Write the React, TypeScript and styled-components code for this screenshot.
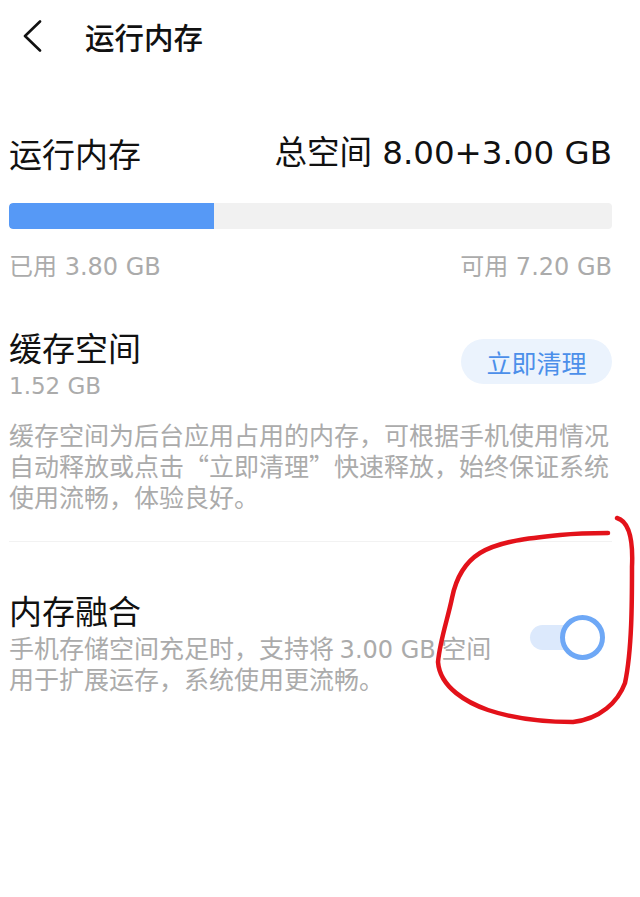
import { createGlobalStyle, styled } from 'styled-components'

const GlobalStyle = createGlobalStyle`
  html, body {
    margin: 0;
    padding: 0;
    background: #ffffff;
  }
  body {
    font-family: "Noto Sans CJK SC", sans-serif;
    color: #111111;
  }
`

const latin = `"DejaVu Sans", "Noto Sans CJK SC", sans-serif`

const Page = styled.div`
  position: relative;
  width: 640px;
  height: 897px;
  overflow: hidden;
  background: #fff;
`

const Header = styled.header`
  height: 72px;
  display: flex;
  align-items: center;
  padding-left: 20px;
  gap: 41px;
`

const BackButton = styled.button`
  border: 0;
  background: none;
  padding: 0;
  width: 24px;
  height: 32px;
  display: flex;
  align-items: center;
  justify-content: center;
`

const HeaderTitle = styled.h1`
  margin: 0;
  font-size: 29.5px;
  font-weight: 500;
  line-height: 40px;
`

const Content = styled.main`
  padding: 61px 28px 0 9px;
`

const Row = styled.div<{ $align?: string }>`
  display: flex;
  justify-content: space-between;
  align-items: ${p => p.$align ?? 'center'};
`

const SectionTitle = styled.h2`
  margin: 0;
  font-size: 33px;
  font-weight: 400;
  line-height: 40px;
`

const Total = styled.span`
  font-family: ${latin};
  font-size: 32.5px;
  line-height: 40px;
`

const Bar = styled.div`
  margin-top: 30px;
  height: 26px;
  border-radius: 4px;
  background: #f1f1f1;
  overflow: hidden;
`

const BarFill = styled.div`
  height: 100%;
  background: #5699f6;
  border-radius: 4px 0 0 4px;
`

const MetaRow = styled(Row)`
  margin-top: 23px;
`

const Meta = styled.span`
  font-family: ${latin};
  font-size: 24px;
  line-height: 30px;
  color: #ababab;
`

const Section = styled.section<{ $gap: number }>`
  margin-top: ${p => p.$gap}px;
`

const SubValue = styled.div`
  margin-top: 4px;
  font-family: ${latin};
  font-size: 23px;
  line-height: 30px;
  color: #ababab;
`

const CleanButton = styled.button`
  border: 0;
  width: 151px;
  height: 45px;
  border-radius: 23px;
  background: #ebf3fd;
  color: #4b8fea;
  font-family: "Noto Sans CJK SC", sans-serif;
  font-size: 25px;
  margin-top: 12px;
  padding: 0;
`

const Description = styled.p<{ $top: number }>`
  margin: ${p => p.$top}px 0 0;
  font-size: 25px;
  line-height: 31px;
  color: #ababab;
`

const Num = styled.span`
  font-family: ${latin};
  font-size: 24px;
  line-height: 1;
`

const Quote = styled.span`
  display: inline-block;
  width: 1em;
  line-height: 1;
  text-align: ${p => (p.dir === 'rtl' ? 'left' : 'right')};
`

const Divider = styled.hr`
  margin: 29px 0 0;
  border: 0;
  border-top: 1px solid #f2f2f2;
`

const TextColumn = styled.div`
  width: 500px;
`

const SwitchRow = styled.div`
  display: flex;
  justify-content: space-between;
  align-items: flex-start;
  padding-right: 20px;
`

const Track = styled.div`
  position: relative;
  margin-top: 35px;
  width: 62px;
  height: 25px;
  border-radius: 13px;
  background: #dce9fc;
`

const Knob = styled.div`
  position: absolute;
  right: -13px;
  top: -10px;
  width: 35px;
  height: 35px;
  border-radius: 50%;
  background: #fff;
  border: 5px solid #6ea8f6;
`

const Annotation = styled.svg`
  position: absolute;
  left: 0;
  top: 0;
  pointer-events: none;
`

export default function App() {
  const used = 3.8
  const total = 11
  return (
    <Page lang="zh-CN">
      <GlobalStyle />
      <Header>
        <BackButton aria-label="返回">
          <svg width="22" height="32" viewBox="0 0 22 32" fill="none">
            <path d="M19 1.5 L4 16 L19 30.5" stroke="#111" strokeWidth="2.6" strokeLinecap="round" strokeLinejoin="round" />
          </svg>
        </BackButton>
        <HeaderTitle>运行内存</HeaderTitle>
      </Header>

      <Content>
        <Row>
          <SectionTitle>运行内存</SectionTitle>
          <Total>总空间 8.00+3.00 GB</Total>
        </Row>
        <Bar>
          <BarFill style={{ width: `${(used / total) * 100 - 0.5}%` }} />
        </Bar>
        <MetaRow>
          <Meta>已用 3.80 GB</Meta>
          <Meta>可用 7.20 GB</Meta>
        </MetaRow>

        <Section $gap={45}>
          <Row $align="flex-start">
            <div>
              <SectionTitle>缓存空间</SectionTitle>
              <SubValue>1.52 GB</SubValue>
            </div>
            <CleanButton>立即清理</CleanButton>
          </Row>
          <Description $top={18}>
            缓存空间为后台应用占用的内存，可根据手机使用情况自动释放或点击<Quote>“</Quote>立即清理<Quote dir="rtl">”</Quote>快速释放，始终保证系统使用流畅，体验良好。
          </Description>
          <Divider />
        </Section>

        <Section $gap={48}>
          <SwitchRow>
            <TextColumn>
              <SectionTitle>内存融合</SectionTitle>
              <Description $top={2}>
                手机存储空间充足时，支持将 <Num>3.00 GB</Num> 空间用于扩展运存，系统使用更流畅。
              </Description>
            </TextColumn>
            <Track>
              <Knob />
            </Track>
          </SwitchRow>
        </Section>
      </Content>

      <Annotation width="640" height="897" viewBox="0 0 640 897">
        <path
          d="M608 533 C590 533 570 534 560 535 C530 538 500 541 480 553 C464 563 456 578 452 598 C448 618 440 640 438 662 C440 688 468 703 488 710 C512 718 545 722 573 722 C600 719 618 702 625 683 C632 650 632 600 632 567 C633 545 631 522 617 518"
          stroke="#e3121a"
          strokeWidth="4.5"
          fill="none"
          strokeLinecap="round"
          strokeLinejoin="round"
        />
      </Annotation>
    </Page>
  )
}
